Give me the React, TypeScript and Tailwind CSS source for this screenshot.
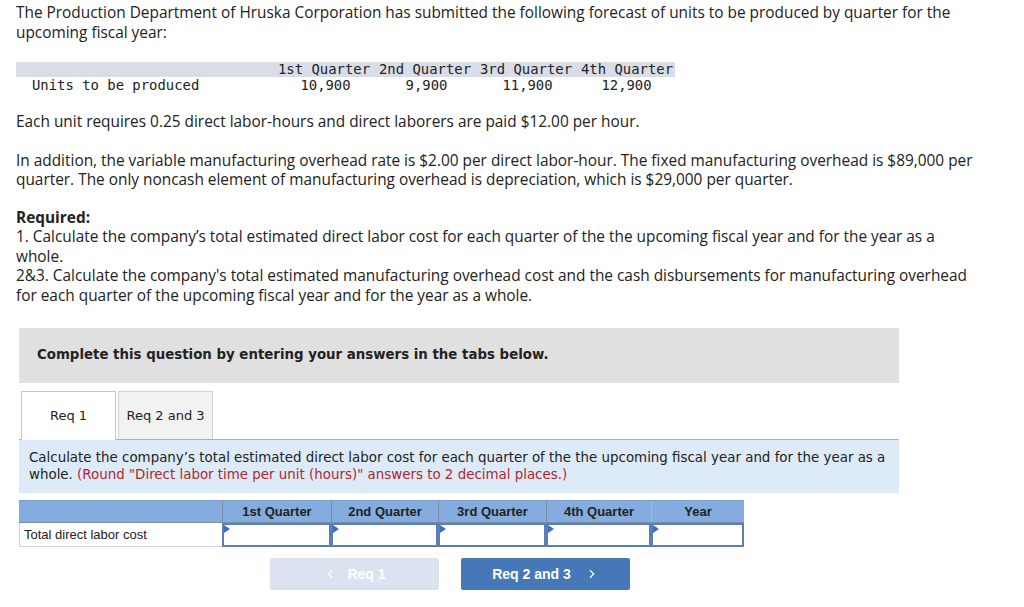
import React from 'react'
import { ChevronLeft, ChevronRight } from 'lucide-react'

const body = { fontFamily: '"Open Sans", Lato, sans-serif' }
const verdana = { fontFamily: '"DejaVu Sans", Verdana, sans-serif' }
const arial = { fontFamily: '"Liberation Sans", Arial, sans-serif' }
const mono = { fontFamily: '"DejaVu Sans Mono", monospace' }

const units = ['10,900', '9,900', '11,900', '12,900']
const quarters = ['1st Quarter', '2nd Quarter', '3rd Quarter', '4th Quarter']

function InputCell() {
  return (
    <div className="relative h-full border-2 border-[#5b7fb5] bg-white">
      <span className="absolute left-0 top-0 h-0 w-0 border-t-[4px] border-b-[4px] border-l-[6px] border-t-transparent border-b-transparent border-l-[#3d6fc4]" />
    </div>
  )
}

export default function App() {
  return (
    <div className="w-[1024px] h-[607px] bg-white text-[#222] overflow-hidden">
      <div className="pl-4 pt-[3px] w-[982px] text-[15.4px] leading-[19.5px]" style={body}>
        <p>The Production Department of Hruska Corporation has submitted the following forecast of units to be produced by quarter for the upcoming fiscal year:</p>

        <div className="mt-[20px] w-[659px] text-[13.9px] leading-[15px] text-[#222]" style={mono}>
          <div className="grid grid-cols-[259px_101px_101px_101px_97px] bg-[#d9dde8] h-[15px]">
            <div />
            {quarters.map(q => (
              <div key={q} className="pl-[3px] whitespace-nowrap">{q}</div>
            ))}
          </div>
          <div className="grid grid-cols-[259px_101px_101px_101px_97px] h-[15px] pt-[1px]">
            <div className="pl-4">Units to be produced</div>
            {units.map((u, i) => (
              <div key={i} className="text-center">{u}</div>
            ))}
          </div>
        </div>

        <p className="mt-[20px]">Each unit requires 0.25 direct labor-hours and direct laborers are paid $12.00 per hour.</p>

        <p className="mt-[19px]">In addition, the variable manufacturing overhead rate is $2.00 per direct labor-hour. The fixed manufacturing overhead is $89,000 per quarter. The only noncash element of manufacturing overhead is depreciation, which is $29,000 per quarter.</p>

        <p className="mt-[18px] font-bold">Required:</p>
        <p>1. Calculate the company’s total estimated direct labor cost for each quarter of the the upcoming fiscal year and for the year as a whole.</p>
        <p>2&amp;3. Calculate the company's total estimated manufacturing overhead cost and the cash disbursements for manufacturing overhead for each quarter of the upcoming fiscal year and for the year as a whole.</p>
      </div>

      <div className="ml-[19px] mt-[23px] w-[880px]">
        <div className="h-[55px] bg-[#e0e0e0] flex items-center pl-[18px] text-[13.35px] font-bold text-[#222]" style={verdana}>
          Complete this question by entering your answers in the tabs below.
        </div>

        <div className="mt-[8px] flex items-end border-b border-[#b0b0b0] pl-[2px]" style={verdana}>
          <div className="w-[95px] h-[49px] bg-white border border-[#c8c8c8] border-b-0 -mb-px flex items-center justify-center text-[13px] text-[#222]">Req 1</div>
          <div className="ml-[2px] w-[95px] h-[48px] bg-[#f2f2f2] border border-[#d0d0d0] border-b-0 flex items-center justify-center text-[13px] text-[#222]">Req 2 and 3</div>
        </div>

        <div className="bg-[#ddeaf7] h-[53px] px-[10px] pt-[9px] text-[13.4px] leading-[17px] text-[#222]" style={verdana}>
          <p>
            Calculate the company’s total estimated direct labor cost for each quarter of the the upcoming fiscal year and for the year as a whole. <span className="text-[#b3262a]">(Round "Direct labor time per unit (hours)" answers to 2 decimal places.)</span>
          </p>
        </div>

        <div className="mt-[7px] w-[725px] text-[13px]" style={arial}>
          <div className="grid grid-cols-[203px_109px_107px_108px_105px_93px] h-[22px] bg-[#84acdf] border-t border-[#7aa0d0]">
            <div />
            {[...quarters, 'Year'].map((q, i) => (
              <div key={q} className={`flex items-center justify-center font-bold text-[#222] border-l ${i === 4 ? 'border-[#9bbbe4]' : 'border-[#7a8a9e]'}`}>{q}</div>
            ))}
          </div>
          <div className="grid grid-cols-[203px_109px_107px_108px_105px_93px] h-[25px] border-t border-[#7b8ea8]">
            <div className="flex items-center pl-[4px] text-[13px] text-[#222] border-l border-b border-[#d0d0d0]">Total direct labor cost</div>
            {[0, 1, 2, 3, 4].map(i => (
              <InputCell key={i} />
            ))}
          </div>
        </div>

        <div className="mt-[11px] flex gap-[22px] pl-[251px]" style={arial}>
          <div className="w-[169px] h-[32px] rounded-[2px] bg-[#dae3ef] flex items-center justify-center gap-[10px] text-white font-bold text-[14px]">
            <ChevronLeft size={14} strokeWidth={2} /> Req 1
          </div>
          <div className="w-[169px] h-[32px] rounded-[2px] bg-[#4677b6] flex items-center justify-center gap-[14px] text-white font-bold text-[14px]">
            Req 2 and 3 <ChevronRight size={14} strokeWidth={2} />
          </div>
        </div>
      </div>
    </div>
  )
}
